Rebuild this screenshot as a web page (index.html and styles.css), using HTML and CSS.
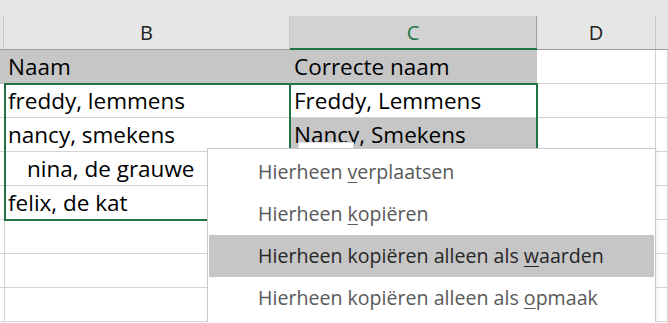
FILE: index.html
```html
<!DOCTYPE html>
<html lang="nl">
<head>
  <meta charset="UTF-8" />
  <title>Blad1</title>
  <link rel="stylesheet" href="styles.css">
</head>
<body>

<div class="sheet">
  <!-- column headers -->
  <div class="col-head"><div class="col-label"></div></div>
  <div class="col-head"><div class="col-label">B</div></div>
  <div class="col-head selected"><div class="col-label">C</div></div>
  <div class="col-head"><div class="col-label">D</div></div>
  <div class="col-head rest"><div class="col-label"></div></div>

  <!-- row 1 -->
  <div class="cell fill"></div>
  <div class="cell fill">Naam</div>
  <div class="cell fill">Correcte naam</div>
  <div class="cell"></div>
  <div class="cell"></div>

  <!-- row 2 -->
  <div class="cell"></div>
  <div class="cell">freddy, lemmens</div>
  <div class="cell">Freddy, Lemmens</div>
  <div class="cell"></div>
  <div class="cell"></div>

  <!-- row 3 -->
  <div class="cell"></div>
  <div class="cell">nancy, smekens</div>
  <div class="cell fill">Nancy, Smekens</div>
  <div class="cell"></div>
  <div class="cell"></div>

  <!-- row 4 -->
  <div class="cell"></div>
  <div class="cell indent">nina, de grauwe</div>
  <div class="cell"></div>
  <div class="cell"></div>
  <div class="cell"></div>

  <!-- row 5 -->
  <div class="cell"></div>
  <div class="cell">felix, de kat</div>
  <div class="cell"></div>
  <div class="cell"></div>
  <div class="cell"></div>

  <!-- row 6 -->
  <div class="cell"></div>
  <div class="cell"></div>
  <div class="cell"></div>
  <div class="cell"></div>
  <div class="cell"></div>

  <!-- row 7 -->
  <div class="cell"></div>
  <div class="cell"></div>
  <div class="cell"></div>
  <div class="cell"></div>
  <div class="cell"></div>

  <!-- row 8 -->
  <div class="cell"></div>
  <div class="cell"></div>
  <div class="cell"></div>
  <div class="cell"></div>
  <div class="cell"></div>

  <!-- selection ranges, drawn over the cells -->
  <div class="range range-b"></div>
  <div class="range range-c"></div>

  <div class="drag-hint"></div>

  <ul class="context-menu">
    <li>Hierheen <u>v</u>erplaatsen</li>
    <li>Hierheen <u>k</u>opiëren</li>
    <li class="hover">Hierheen kopiëren alleen als <u>w</u>aarden</li>
    <li>Hierheen kopiëren alleen als <u>o</u>pmaak</li>
  </ul>
</div>

</body>
</html>
```

FILE: styles.css
```css
* {
  margin: 0;
  padding: 0;
  box-sizing: border-box;
}

body {
  font-family: 'Open Sans', sans-serif;
  background-color: #fff;
  color: #000;
  overflow: hidden;
}

.sheet {
  position: relative;
  display: grid;
  grid-template-columns: 4px 286px 247px 119px 12px;
  grid-template-rows: 50px repeat(8, 34px);
}

/* column headers */
.col-head {
  background-color: #e6e6e6;
  padding-top: 16px;
  border-bottom: 1px solid #9e9e9e;
}

.col-label {
  height: 100%;
  border-right: 1px solid #c6c6c6;
  display: flex;
  align-items: center;
  justify-content: center;
  font-size: 20px;
  color: #222;
}

.col-head.selected {
  border-bottom: 2px solid #217346;
}

.col-head.selected .col-label {
  background-color: #d2d2d2;
  color: #217346;
  border-right-color: #9e9e9e;
}

.col-head.rest .col-label {
  border-right: none;
}

/* cells */
.cell {
  border-right: 1px solid #d4d4d4;
  border-bottom: 1px solid #d4d4d4;
  padding: 0 0 0 4px;
  font-size: 22.5px;
  line-height: 33px;
  white-space: nowrap;
  overflow: hidden;
}

.cell.fill {
  background-color: #c6c6c6;
  border-color: #c6c6c6;
}

.cell.indent {
  padding-left: 23px;
}

/* selected ranges */
.range {
  position: absolute;
  top: -1px;
  left: -1px;
  right: -1px;
  bottom: -1px;
  border: 2px solid #217346;
  pointer-events: none;
  z-index: 1;
}

.range-b {
  grid-column: 2 / 3;
  grid-row: 3 / 7;
  left: 0;
}

.range-c {
  grid-column: 3 / 4;
  grid-row: 3 / 5;
}

.drag-hint {
  position: absolute;
  left: 298px;
  top: 142px;
  width: 56px;
  height: 10px;
  background-color: #fff;
  border: 1px solid #e0e0e0;
  z-index: 2;
}

/* context menu */
.context-menu {
  position: absolute;
  left: 207px;
  top: 148px;
  width: 449px;
  height: 190px;
  list-style: none;
  background-color: #fff;
  border: 1px solid #c9c9c9;
  box-shadow: 1px 1px 3px rgba(0, 0, 0, 0.08);
  padding: 2px 1px;
  z-index: 3;
  font-size: 19.6px;
  color: #595959;
}

.context-menu li {
  height: 42px;
  line-height: 42px;
  padding-left: 49px;
  white-space: nowrap;
}

.context-menu li.hover {
  background-color: #c6c6c6;
  color: #262626;
}

.context-menu u {
  text-underline-offset: 3px;
}
```
